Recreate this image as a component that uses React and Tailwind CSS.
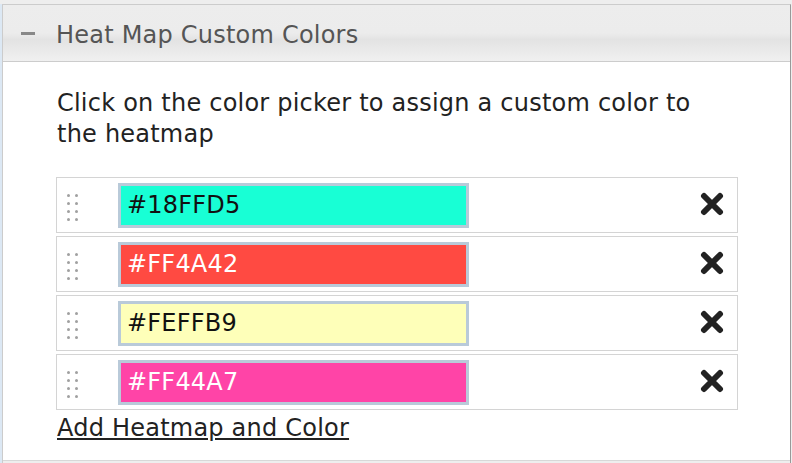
import { useState } from 'react';

const initialColors = [
  { id: 1, hex: '#18FFD5', text: 'text-[#111]' },
  { id: 2, hex: '#FF4A42', text: 'text-white' },
  { id: 3, hex: '#FEFFB9', text: 'text-[#111]' },
  { id: 4, hex: '#FF44A7', text: 'text-white' },
];

function DragHandle() {
  return (
    <div className="grid grid-cols-2 gap-x-[5px] gap-y-[5px] w-[11px]">
      {Array.from({ length: 8 }).map((_, i) => (
        <span key={i} className="block w-[3px] h-[3px] rounded-full bg-[#a0a0a0]"></span>
      ))}
    </div>
  );
}

function RemoveIcon() {
  return (
    <svg width="26" height="24" viewBox="0 0 26 24">
      <path d="M5 4 L21 20 M21 4 L5 20" stroke="#222" strokeWidth="6" strokeLinecap="round" />
    </svg>
  );
}

export default function App() {
  const [colors, setColors] = useState(initialColors);

  const removeColor = id => {
    setColors(prev => prev.filter(c => c.id !== id));
  };

  return (
    <div className="w-[792px] h-[463px] bg-[#eee] pt-[4px] overflow-hidden font-['DejaVu_Sans',Verdana,sans-serif] tracking-[0.22px]">
      <div className="h-[459px] border-l-2 border-[#dce8f4]">
        <div className="h-full mr-[1px] border border-b-0 border-[#ccc] border-r-[#999] bg-white flex flex-col">
          <div className="h-[57px] shrink-0 border-b border-[#ccc] bg-[linear-gradient(to_bottom,#ededed_0%,#ececec_50%,#e3e3e3_62%,#f0f0f0_100%)] flex items-center">
            <span className="block w-[14px] h-[3px] bg-[#888] ml-[18px]"></span>
            <span className="ml-[21px] text-[24px] text-[#555] leading-none pt-[4px]">Heat Map Custom Colors</span>
          </div>

          <div className="flex-1 pl-[53px] pr-[52px] pt-[26px]">
            <p className="max-w-[660px] text-[24px] leading-[31px] text-[#222] pl-[1px]">
              Click on the color picker to assign a custom color to the heatmap
            </p>

            <div className="mt-[27px] flex flex-col gap-[3px]">
              {colors.map(c => (
                <div key={c.id} className="h-[56px] border border-[#d4d4d4] flex items-center">
                  <div className="w-[61px] pl-[10px] pt-[4px] shrink-0">
                    <DragHandle />
                  </div>
                  <div
                    className={`w-[351px] h-[45px] border-[3px] border-[#b9cad9] flex items-center pl-[6px] text-[24px] ${c.text}`}
                    style={{ backgroundColor: c.hex }}
                  >
                    {c.hex}
                  </div>
                  <button onClick={() => removeColor(c.id)} className="ml-auto mr-[12px] mb-[2px]">
                    <RemoveIcon />
                  </button>
                </div>
              ))}
            </div>

            <a href="#" className="inline-block mt-[4px] pl-[1px] text-[24px] leading-[28px] text-[#222] underline underline-offset-[2px]">
              Add Heatmap and Color
            </a>
          </div>

          <div className="h-[3px] shrink-0 border-t border-[#d8d8d8] bg-[#eee]"></div>
        </div>
      </div>
    </div>
  );
}
